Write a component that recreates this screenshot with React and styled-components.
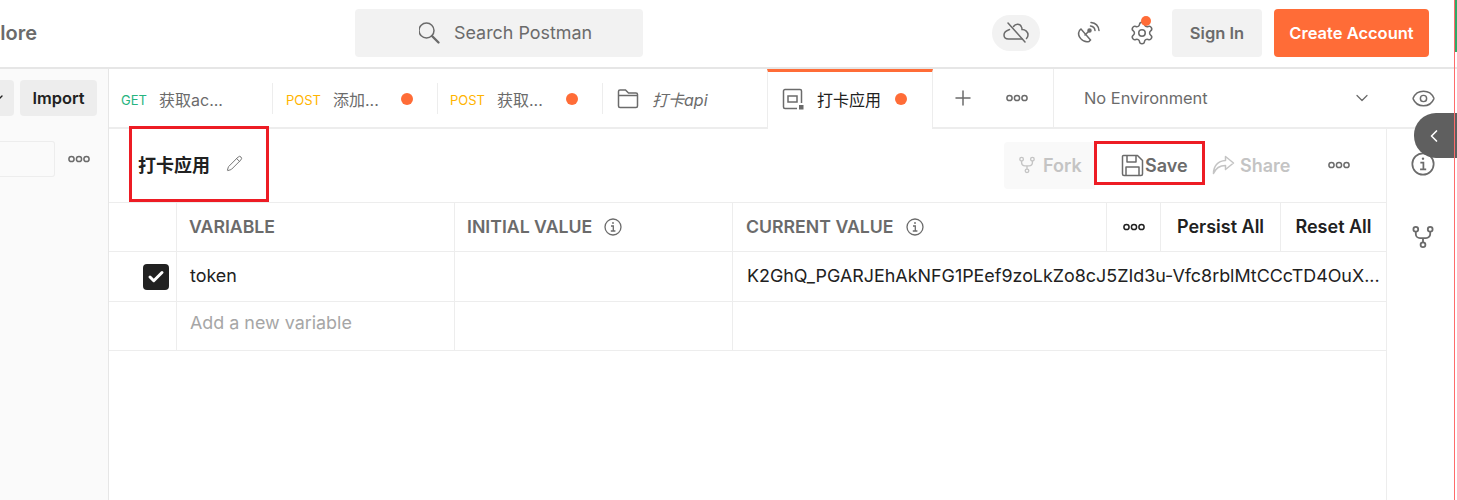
import React from "react";
import styled, { createGlobalStyle } from "styled-components";
import { Settings, Pencil, Eye, ChevronDown, ChevronLeft, Plus, Check } from "lucide-react";

const Global = createGlobalStyle`
  html, body { margin: 0; padding: 0; background: #fff; }
  body {
    font-family: Inter, "Noto Sans CJK SC", "Noto Sans", sans-serif;
    color: #212121;
  }
  * { box-sizing: border-box; }
`;

const Page = styled.div`
  position: relative;
  width: 1457px;
  height: 500px;
  overflow: hidden;
  background: #fff;
`;

const Header = styled.header`
  height: 69px;
  display: flex;
  align-items: flex-start;
  padding-top: 9px;
  border-bottom: 2px solid #e6e6e6;
`;

const NavClip = styled.div`
  width: 37px;
  height: 48px;
  display: flex;
  justify-content: flex-end;
  align-items: center;
  overflow: hidden;
  font-size: 20px;
  font-weight: 600;
  color: #6b6b6b;
`;

const SearchBox = styled.div`
  width: 288px;
  height: 48px;
  margin-left: 318px;
  border-radius: 4px;
  background: #f2f2f2;
  display: flex;
  align-items: center;
  padding: 0 0 2px 64px;
  gap: 9px;
  font-size: 17.9px;
  color: #6b6b6b;
`;

const HeaderRight = styled.div`
  margin-left: auto;
  padding-right: 28px;
  display: flex;
  align-items: center;
  height: 48px;
`;

const CloudPill = styled.div`
  width: 48px;
  height: 36px;
  border-radius: 18px;
  background: #f2f2f2;
  display: flex;
  align-items: center;
  justify-content: center;
  color: #6b6b6b;
  margin-right: 34px;
`;

const IconSlot = styled.div`
  position: relative;
  width: 28px;
  height: 36px;
  display: flex;
  align-items: center;
  justify-content: center;
  color: #6b6b6b;
  margin-right: ${(p) => p.$gap || 0}px;
`;

const Badge = styled.span`
  position: absolute;
  top: 1px;
  left: 13px;
  width: 10px;
  height: 10px;
  border-radius: 50%;
  background: #ff6c37;
`;

const HeadButton = styled.div`
  height: 48px;
  width: ${(p) => p.$w}px;
  margin-right: ${(p) => p.$gap || 0}px;
  border-radius: 4px;
  display: flex;
  align-items: center;
  justify-content: center;
  font-size: 16.5px;
  font-weight: 600;
  background: ${(p) => (p.$primary ? "#ff6c37" : "#f2f2f2")};
  color: ${(p) => (p.$primary ? "#fff" : "#6b6b6b")};
`;

const Body = styled.div`
  display: flex;
  height: 431px;
`;

const Sidebar = styled.aside`
  width: 109px;
  flex: none;
  background: #fafafa;
  border-right: 1px solid #e6e6e6;
`;

const SideTop = styled.div`
  height: 60px;
  display: flex;
  align-items: flex-start;
  padding-top: 11px;
  gap: 6px;
`;

const SideClipped = styled.div`
  width: 14px;
  height: 36px;
  background: #ededed;
  border-radius: 0 4px 4px 0;
  display: flex;
  align-items: center;
  overflow: hidden;
  color: #212121;
  svg { flex: none; margin-left: -10px; }
`;

const ImportBtn = styled.div`
  width: 77px;
  height: 36px;
  background: #ededed;
  border-radius: 4px;
  display: flex;
  align-items: center;
  justify-content: center;
  font-size: 16.4px;
  font-weight: 600;
  color: #212121;
`;

const SideFilter = styled.div`
  display: flex;
  align-items: center;
  margin-top: 12px;
  gap: 13px;
  color: #6b6b6b;
`;

const FilterInput = styled.div`
  width: 55px;
  height: 36px;
  border: 1px solid #ededed;
  border-left: 0;
  border-radius: 0 3px 3px 0;
`;

const Main = styled.main`
  flex: 1;
  min-width: 0;
  display: flex;
  flex-direction: column;
`;

const TabBar = styled.div`
  height: 60px;
  flex: none;
  display: flex;
  border-bottom: 2px solid #ededed;
`;

const Tab = styled.div`
  width: ${(p) => p.$w}px;
  height: ${(p) => (p.$active ? 60 : 58)}px;
  flex: none;
  display: flex;
  align-items: center;
  padding-left: ${(p) => p.$pad || 12}px;
  padding-top: ${(p) => (p.$active ? 0 : 2)}px;
  padding-bottom: ${(p) => (p.$active ? 4 : 0)}px;
  font-size: 16px;
  color: ${(p) => (p.$active ? "#212121" : "#6b6b6b")};
  font-style: ${(p) => (p.$italic ? "italic" : "normal")};
  position: relative;
  background: #fff;
  ${(p) =>
    p.$active
      ? `border-top: 3px solid #ff6c37; border-left: 1px solid #ededed; border-right: 1px solid #ededed;`
      : ""}
  ${(p) =>
    p.$divider
      ? `&::after { content: ""; position: absolute; right: 0; top: 14px; height: 31px; width: 1px; background: #ededed; }`
      : ""}
`;

const Method = styled.span`
  font-size: 13px;
  margin-top: 2px;
  width: ${(p) => p.$w}px;
  flex: none;
  color: ${(p) => p.$color};
`;

const TabLabel = styled.span`
  flex: 1;
  margin-left: ${(p) => p.$ml || 0}px;
`;

const Dot = styled.span`
  width: 12px;
  height: 12px;
  flex: none;
  border-radius: 50%;
  background: #ff6c37;
  margin-right: ${(p) => p.$right}px;
`;

const TabTools = styled.div`
  width: 121px;
  flex: none;
  height: 58px;
  display: flex;
  align-items: center;
  padding-left: 18px;
  gap: 31px;
  color: #6b6b6b;
  border-right: 1px solid #ededed;
`;

const EnvPick = styled.div`
  flex: 1;
  height: 58px;
  display: flex;
  align-items: center;
  padding-left: 30px;
  font-size: 16.4px;
  color: #6b6b6b;
  svg { color: #6b6b6b; }
`;

const EnvName = styled.span`
  flex: 1;
`;

const EnvEye = styled.div`
  width: 85px;
  display: flex;
  justify-content: center;
  padding-left: 17px;
`;

const Content = styled.div`
  flex: 1;
  display: flex;
  min-height: 0;
`;

const Panel = styled.div`
  width: 1278px;
  flex: none;
  border-right: 1px solid #ededed;
`;

const TitleRow = styled.div`
  height: 74px;
  display: flex;
  align-items: center;
  padding: 0 0 4px 29px;
  border-bottom: 1px solid #ededed;
`;

const Title = styled.h1`
  margin: 0;
  font-size: 18px;
  font-weight: 700;
  color: #212121;
`;

const EditIcon = styled.span`
  display: flex;
  margin-left: 16px;
  color: #6b6b6b;
`;

const Actions = styled.div`
  margin-left: auto;
  display: flex;
  align-items: center;
  height: 47px;
  margin-top: 3px;
  font-size: 18px;
  font-weight: 600;
`;

const ForkBtn = styled.div`
  width: 91px;
  height: 47px;
  background: #f9f9f9;
  border-radius: 4px 0 0 4px;
  display: flex;
  align-items: center;
  padding-left: 14px;
  gap: 7px;
  color: #c4c4c4;
`;

const SaveBtn = styled.div`
  width: 109px;
  display: flex;
  align-items: center;
  padding-left: 26px;
  gap: 1px;
  color: #6b6b6b;
`;

const ShareBtn = styled.div`
  width: 99px;
  display: flex;
  align-items: center;
  padding-left: 8px;
  gap: 5px;
  color: #c4c4c4;
`;

const MoreBtn = styled.div`
  width: 83px;
  padding-left: 25px;
  display: flex;
  color: #6b6b6b;
`;

const Row = styled.div`
  display: grid;
  grid-template-columns: ${(p) => (p.$head ? "68px 278px 278px 374px 54px 120px 105px" : "68px 278px 278px 653px")};
  height: ${(p) => p.$h}px;
  border-bottom: 1px solid #ededed;
`;

const Cell = styled.div`
  border-right: ${(p) => (p.$last ? 0 : "1px solid #ededed")};
  display: flex;
  align-items: center;
  justify-content: ${(p) => (p.$center ? "center" : "flex-start")};
  padding-left: ${(p) => (p.$center ? 0 : p.$pad ?? 13)}px;
  padding-bottom: ${(p) => p.$lift || 0}px;
  min-width: 0;
  font-size: ${(p) => p.$size || 17.9}px;
  color: ${(p) => p.$color || "#212121"};
  font-weight: ${(p) => p.$weight || 400};
`;

const HeadText = styled.span`
  font-size: 17.7px;
  font-weight: 600;
  color: #6b6b6b;
  margin-right: 12px;
`;

const ValueText = styled.span`
  white-space: nowrap;
`;

const CheckBox = styled.span`
  width: 26px;
  height: 26px;
  border-radius: 4px;
  background: #212121;
  color: #fff;
  display: flex;
  align-items: center;
  justify-content: center;
`;

const Rail = styled.div`
  flex: 1;
  display: flex;
  flex-direction: column;
  align-items: center;
  padding: 23px 0 0 2px;
  gap: 49px;
  color: #6b6b6b;
`;

const Annotation = styled.div`
  position: absolute;
  left: ${(p) => p.$x}px;
  top: ${(p) => p.$y}px;
  width: ${(p) => p.$w}px;
  height: ${(p) => p.$h}px;
  border: 3px solid #ed1c24;
  pointer-events: none;
`;

const CollapseTab = styled.div`
  position: absolute;
  left: 1414px;
  top: 113px;
  width: 43px;
  height: 45px;
  background: #5f5f5f;
  border-radius: 22px 0 0 22px;
  color: #fff;
  display: flex;
  align-items: center;
  justify-content: center;
  padding-right: 4px;
`;

const EdgeLine = styled.div`
  position: absolute;
  top: 0;
  left: ${(p) => p.$x}px;
  width: ${(p) => p.$w}px;
  height: ${(p) => p.$h}px;
  background: ${(p) => p.$color};
`;

const SearchIcon = () => (
  <svg width="26" height="26" viewBox="0 0 26 26" fill="none" stroke="#6b6b6b">
    <circle cx="7.500" cy="11.500" r="7.500" strokeWidth="1.500" />
    <path d="M13 17l6.500 6.500" strokeWidth="2.400" strokeLinecap="round" />
  </svg>
);

const CloudIcon = () => (
  <svg width="28" height="24" viewBox="0 0 28 24" fill="none" stroke="currentColor" strokeWidth="1.500" strokeLinecap="round">
    <path d="M7.500 8.500C4.500 9.500 2 11 2 14c0 2.500 2 4 4.500 4H20" />
    <path d="M11.500 5.500c2-3 6.500-3 8 .5.500 1 .500 2 .500 2.500 3.500 0 6 2.500 6 5.500 0 1.500-.500 2.500-1.500 3.500" />
    <path d="M6 2l17 19" />
  </svg>
);

const Dots = ({ color = "currentColor" }) => (
  <svg width="22" height="8" viewBox="0 0 22 8" fill="none" stroke={color} strokeWidth="1.5">
    <circle cx="3.5" cy="4" r="2.6" />
    <circle cx="11" cy="4" r="2.6" />
    <circle cx="18.5" cy="4" r="2.6" />
  </svg>
);

const ForkIcon = ({ size = 18 }) => (
  <svg width={size} height={size} viewBox="0 0 20 20" fill="none" stroke="currentColor" strokeWidth="1.5">
    <circle cx="4" cy="3.500" r="2" />
    <circle cx="16" cy="3.500" r="2" />
    <circle cx="10" cy="16.500" r="2" />
    <path d="M4 5.500v2a3.500 3.500 0 0 0 3.500 3.500h5a3.500 3.500 0 0 0 3.500-3.500v-2M10 11v3.500" />
  </svg>
);

const SatelliteIcon = () => (
  <svg width="26" height="26" viewBox="0 0 26 26" fill="none" stroke="currentColor" strokeWidth="1.5" strokeLinecap="round">
    <path d="M4.5 10.5c-3 5.5 3 12.5 9.500 11l1.500-1.500L6 9z" />
    <path d="M10 15l4-4" />
    <circle cx="14.500" cy="10.500" r="1.500" fill="currentColor" />
    <path d="M15.500 6c2.500.3 4.200 2 4.500 4.500M16 2.500c4.500.5 7.500 3.500 8 8" />
  </svg>
);

const FolderIcon = () => (
  <svg width="22" height="22" viewBox="0 0 22 22" fill="none" stroke="#6b6b6b" strokeWidth="1.5">
    <path d="M1.500 18V3.500a1.500 1.500 0 0 1 1.500-1.500h5.500l3 3H19a1.500 1.500 0 0 1 1.500 1.500V18a1.500 1.500 0 0 1-1.500 1.500H3A1.500 1.500 0 0 1 1.500 18z" />
    <path d="M1.500 7.500h19" />
  </svg>
);

const EnvIcon = () => (
  <svg width="22" height="22" viewBox="0 0 22 22" fill="none" stroke="#6b6b6b" strokeWidth="1.5">
    <path d="M15 20.500H3A1.500 1.500 0 0 1 1.500 19V3A1.500 1.500 0 0 1 3 1.500h15A1.500 1.500 0 0 1 19.500 3v12" />
    <rect x="6" y="8" width="9" height="6" />
    <rect x="17" y="17" width="4.500" height="4.500" fill="#6b6b6b" stroke="none" />
  </svg>
);

const SaveIcon = () => (
  <svg width="23" height="23" viewBox="0 0 23 23" fill="none" stroke="#6b6b6b" strokeWidth="1.5" strokeLinejoin="round">
    <path d="M2.500 1.500h14l5 5v13.500a1.500 1.500 0 0 1-1.500 1.500H3a1.500 1.500 0 0 1-1.500-1.500V2.500a1 1 0 0 1 1-1z" />
    <path d="M6 1.500v6.500h9V1.500M5 21.500v-8.500h13v8.500" />
  </svg>
);

const ShareIcon = () => (
  <svg width="23" height="20" viewBox="0 0 23 20" fill="none" stroke="#c4c4c4" strokeWidth="1.5" strokeLinejoin="round">
    <path d="M13.500 1.500l8 6.500-8 6.500v-4c-5.500 0-9.500 2-12 8 0-7 4-12.500 12-13z" />
  </svg>
);

const InfoIcon = ({ size = 18, color = "currentColor" }) => (
  <svg width={size} height={size} viewBox="0 0 18 18" fill="none" stroke={color} strokeWidth="1.3">
    <circle cx="9" cy="9" r="8" />
    <path d="M7 8h2.300v5M6.800 13h4.600" />
    <circle cx="9" cy="5" r="0.9" fill={color} stroke="none" />
  </svg>
);

export default function App() {
  return (
    <Page>
      <Global />
      <Header>
        <NavClip>Explore</NavClip>
        <SearchBox>
          <SearchIcon />
          Search Postman
        </SearchBox>
        <HeaderRight>
          <CloudPill>
            <CloudIcon />
          </CloudPill>
          <IconSlot $gap={26}>
            <SatelliteIcon />
          </IconSlot>
          <IconSlot $gap={16}>
            <Settings size={26} strokeWidth={1.4} />
            <Badge />
          </IconSlot>
          <HeadButton $w={90} $gap={12}>Sign In</HeadButton>
          <HeadButton $w={155} $primary>Create Account</HeadButton>
        </HeaderRight>
      </Header>
      <Body>
        <Sidebar>
          <SideTop>
            <SideClipped>
              <ChevronDown size={16} />
            </SideClipped>
            <ImportBtn>Import</ImportBtn>
          </SideTop>
          <SideFilter>
            <FilterInput />
            <Dots />
          </SideFilter>
        </Sidebar>
        <Main>
          <TabBar>
            <Tab $w={164} $divider>
              <Method $w={38} $color="#26b47f">GET</Method>
              <TabLabel>获取ac...</TabLabel>
            </Tab>
            <Tab $w={165} $pad={13} $divider>
              <Method $w={47} $color="#ffb400">POST</Method>
              <TabLabel>添加...</TabLabel>
              <Dot $right={25} />
            </Tab>
            <Tab $w={165} $pad={12} $divider>
              <Method $w={47} $color="#ffb400">POST</Method>
              <TabLabel>获取...</TabLabel>
              <Dot $right={25} />
            </Tab>
            <Tab $w={164} $pad={14} $italic>
              <FolderIcon />
              <TabLabel $ml={13}>打卡api</TabLabel>
            </Tab>
            <Tab $w={166} $pad={14} $active>
              <EnvIcon />
              <TabLabel $ml={13}>打卡应用</TabLabel>
              <Dot $right={25} />
            </Tab>
            <TabTools>
              <Plus size={24} strokeWidth={1.5} />
              <Dots />
            </TabTools>
            <EnvPick>
              <EnvName>No Environment</EnvName>
              <ChevronDown size={20} strokeWidth={1.5} />
              <EnvEye>
                <Eye size={25} strokeWidth={1.4} />
              </EnvEye>
            </EnvPick>
          </TabBar>
          <Content>
            <Panel>
              <TitleRow>
                <Title>打卡应用</Title>
                <EditIcon>
                  <Pencil size={17} strokeWidth={1.3} />
                </EditIcon>
                <Actions>
                  <ForkBtn>
                    <ForkIcon />
                    Fork
                  </ForkBtn>
                  <SaveBtn>
                    <SaveIcon />
                    Save
                  </SaveBtn>
                  <ShareBtn>
                    <ShareIcon />
                    Share
                  </ShareBtn>
                  <MoreBtn>
                    <Dots />
                  </MoreBtn>
                </Actions>
              </TitleRow>
              <Row $head $h={49}>
                <Cell />
                <Cell $pad={12} $lift={1}><HeadText>VARIABLE</HeadText></Cell>
                <Cell $pad={12} $lift={1}><HeadText>INITIAL VALUE</HeadText><InfoIcon color="#6b6b6b" /></Cell>
                <Cell $pad={13} $lift={1}><HeadText>CURRENT VALUE</HeadText><InfoIcon color="#6b6b6b" /></Cell>
                <Cell $center><Dots color="#212121" /></Cell>
                <Cell $center $size={18} $weight={600} $lift={1}>Persist All</Cell>
                <Cell $center $size={18} $weight={600} $lift={1} $last>Reset All</Cell>
              </Row>
              <Row $h={50}>
                <Cell $pad={34}>
                  <CheckBox>
                    <Check size={18} strokeWidth={4} />
                  </CheckBox>
                </Cell>
                <Cell $pad={13} $lift={3}>token</Cell>
                <Cell />
                <Cell $pad={14} $lift={2} $last>
                  <ValueText>K2GhQ_PGARJEhAkNFG1PEef9zoLkZo8cJ5ZId3u-Vfc8rblMtCCcTD4OuX...</ValueText>
                </Cell>
              </Row>
              <Row $h={49}>
                <Cell />
                <Cell $pad={13} $lift={8} $color="#a6a6a6">Add a new variable</Cell>
                <Cell />
                <Cell $last />
              </Row>
            </Panel>
            <Rail>
              <InfoIcon size={24} />
              <ForkIcon size={24} />
            </Rail>
          </Content>
        </Main>
      </Body>
      <Annotation $x={129} $y={126} $w={140} $h={76} />
      <Annotation $x={1094} $y={141} $w={111} $h={44} />
      <CollapseTab>
        <ChevronLeft size={20} strokeWidth={2} />
      </CollapseTab>
      <EdgeLine $x={1454} $w={1} $h={500} $color="#ff6b6b" />
      <EdgeLine $x={1455} $w={2} $h={52} $color="#2fa866" />
    </Page>
  );
}
